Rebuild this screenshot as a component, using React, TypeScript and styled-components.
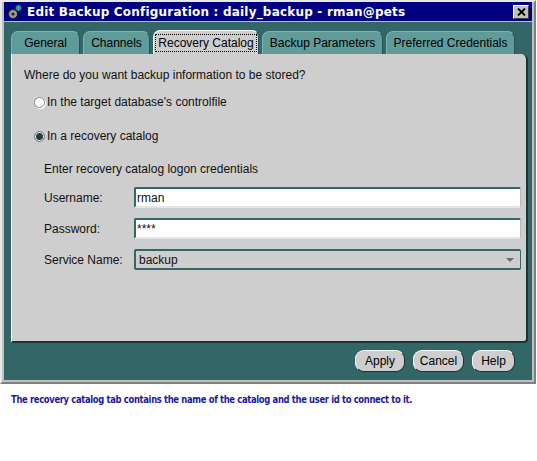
import React from 'react';
import styled, { createGlobalStyle } from 'styled-components';

const GlobalStyle = createGlobalStyle`
  html, body {
    margin: 0;
    padding: 0;
    background: #ffffff;
  }
  body {
    font-family: 'Liberation Sans', Arial, sans-serif;
  }
`;

const tabs = [
  { label: 'General', width: 69 },
  { label: 'Channels', width: 67 },
  { label: 'Recovery Catalog', width: 106 },
  { label: 'Backup Parameters', width: 121 },
  { label: 'Preferred Credentials', width: 129 },
];
const activeTab = 'Recovery Catalog';

const Frame = styled.div`
  width: 536px;
  box-sizing: border-box;
  background: #c0c0c0;
  border: 2px solid;
  border-color: #e8e8e8 #808080 #808080 #e8e8e8;
  padding: 0 2px 2px 2px;
`;

const TitleBar = styled.div`
  height: 19px;
  background: #000080;
  display: flex;
  align-items: center;
  padding: 0 3px;
  gap: 4px;
`;

const TitleText = styled.span`
  flex: 1;
  color: #ffffff;
  font-family: 'DejaVu Sans', Verdana, sans-serif;
  font-weight: bold;
  font-size: 12px;
  letter-spacing: 0.2px;
  white-space: nowrap;
`;

const CloseButton = styled.div`
  width: 16px;
  height: 14px;
  box-sizing: border-box;
  background: #c0c0c0;
  border: 1px solid;
  border-color: #ffffff #404040 #404040 #ffffff;
  display: flex;
  align-items: center;
  justify-content: center;
`;

const Body = styled.div`
  background: #336666;
  padding: 8px 4px 8px 7px;
  margin-top: 1px;
`;

const TabRow = styled.div`
  display: flex;
  gap: 3px;
  height: 24px;
  align-items: flex-end;
`;

const Tab = styled.div<{ $active: boolean; $width: number }>`
  width: ${(p) => p.$width}px;
  flex: none;
  height: ${(p) => (p.$active ? '24px' : '23px')};
  box-sizing: border-box;
  background: ${(p) => (p.$active ? '#cecece' : '#5f9b99')};
  border-radius: 7px 7px 0 0;
  border-top: 1px solid ${(p) => (p.$active ? '#ffffff' : '#7fb3b1')};
  border-left: 1px solid ${(p) => (p.$active ? '#ffffff' : '#7fb3b1')};
  border-right: 1px solid #2a5251;
  display: flex;
  align-items: center;
  justify-content: center;
  font-size: 12px;
  color: #000000;
  white-space: nowrap;
`;

const FocusLabel = styled.span`
  border: 1px dotted #000000;
  padding: 1px 2px;
  line-height: 14px;
`;

const Panel = styled.div`
  height: 289px;
  box-sizing: border-box;
  background: #cecece;
  border-radius: 0 6px 4px 2px;
  border-left: 1px solid #ffffff;
  border-bottom: 2px solid #1a3333;
  border-right: 2px solid #1a3333;
  padding: 13px 5px 0 12px;
  font-size: 12px;
  color: #111111;
`;

const Line = styled.div<{ $gap: number; $indent?: number }>`
  height: 16px;
  line-height: 16px;
  margin-top: ${(p) => p.$gap}px;
  padding-left: ${(p) => p.$indent ?? 0}px;
  display: flex;
  align-items: center;
  white-space: nowrap;
`;

const Radio = styled.span<{ $checked: boolean }>`
  width: 11px;
  height: 11px;
  box-sizing: border-box;
  border-radius: 50%;
  background: ${(p) => (p.$checked ? '#1f3f3f' : '#ffffff')};
  border: 1px solid #8a8a8a;
  box-shadow: ${(p) => (p.$checked ? 'inset 0 0 0 1px #ffffff' : '1px 1px 0 #ffffff')};
  margin-right: 2px;
`;

const FieldRow = styled.div`
  display: flex;
  align-items: center;
  height: 21px;
  margin-top: 10px;
  padding-left: 20px;
`;

const FieldLabel = styled.span`
  width: 90px;
  flex: none;
`;

const TextBox = styled.div`
  flex: 1;
  height: 21px;
  box-sizing: border-box;
  background: #ffffff;
  border-radius: 2px;
  border-top: 2px solid #336666;
  border-left: 2px solid #336666;
  border-right: 1px solid #b8b8b8;
  border-bottom: 2px solid #e4e4e4;
  padding-left: 1px;
  display: flex;
  align-items: center;
  font-size: 12px;
`;

const SelectBox = styled.div`
  flex: 1;
  height: 21px;
  box-sizing: border-box;
  background: #cecece;
  border-radius: 2px;
  border: 2px solid #336666;
  border-right-width: 1px;
  padding: 0 6px 0 3px;
  display: flex;
  align-items: center;
  justify-content: space-between;
`;

const Arrow = styled.span`
  width: 0;
  height: 0;
  border-left: 4px solid transparent;
  border-right: 4px solid transparent;
  border-top: 4px solid #6a6a6a;
`;

const ButtonRow = styled.div`
  display: flex;
  justify-content: flex-end;
  gap: 8px;
  margin-top: 7px;
  padding-right: 13px;
`;

const Button = styled.div<{ $width: number }>`
  width: ${(p) => p.$width}px;
  height: 22px;
  box-sizing: border-box;
  background: #cecece;
  border-radius: 9px;
  border: 1px solid;
  border-color: #ffffff #1a3333 #1a3333 #ffffff;
  display: flex;
  align-items: center;
  justify-content: center;
  font-size: 12px;
  color: #000000;
`;

const Caption = styled.div`
  margin: 9px 0 0 11px;
  font-family: 'DejaVu Sans Condensed', 'DejaVu Sans', sans-serif;
  font-weight: bold;
  font-size: 11px;
  letter-spacing: -0.4px;
  color: #1a1aa0;
  white-space: nowrap;
  transform: scaleX(0.85);
  transform-origin: left center;
`;

const AppIcon = () => (
  <svg width="16" height="16" viewBox="0 0 16 16">
    <circle cx="6" cy="10" r="4.5" fill="#9a9a9a" stroke="#202020" strokeWidth="1" />
    <circle cx="6" cy="10" r="1.6" fill="#202020" />
    <circle cx="11.5" cy="4" r="3" fill="#2a8a2a" />
    <path d="M11.5 1.5 V6.5 M9 4 H14" stroke="#40a0ff" strokeWidth="1.2" />
  </svg>
);

const App = () => {
  return (
    <>
      <GlobalStyle />
      <Frame>
        <TitleBar>
          <AppIcon />
          <TitleText>Edit Backup Configuration : daily_backup - rman@pets</TitleText>
          <CloseButton>
            <svg width="9" height="8" viewBox="0 0 9 8">
              <path d="M1 0.5 L8 7.5 M8 0.5 L1 7.5" stroke="#000" strokeWidth="1.8" />
            </svg>
          </CloseButton>
        </TitleBar>
        <Body>
          <TabRow>
            {tabs.map((t) => (
              <Tab key={t.label} $active={t.label === activeTab} $width={t.width}>
                {t.label === activeTab ? <FocusLabel>{t.label}</FocusLabel> : t.label}
              </Tab>
            ))}
          </TabRow>
          <Panel>
            <Line $gap={0}>Where do you want backup information to be stored?</Line>
            <Line $gap={11} $indent={10}>
              <Radio $checked={false} />
              In the target database's controlfile
            </Line>
            <Line $gap={18} $indent={10}>
              <Radio $checked={true} />
              In a recovery catalog
            </Line>
            <Line $gap={17} $indent={20}>Enter recovery catalog logon credentials</Line>
            <FieldRow>
              <FieldLabel>Username:</FieldLabel>
              <TextBox>rman</TextBox>
            </FieldRow>
            <FieldRow>
              <FieldLabel>Password:</FieldLabel>
              <TextBox>****</TextBox>
            </FieldRow>
            <FieldRow>
              <FieldLabel>Service Name:</FieldLabel>
              <SelectBox>
                backup
                <Arrow />
              </SelectBox>
            </FieldRow>
          </Panel>
          <ButtonRow>
            <Button $width={50}>Apply</Button>
            <Button $width={51}>Cancel</Button>
            <Button $width={43}>Help</Button>
          </ButtonRow>
        </Body>
      </Frame>
      <Caption>The recovery catalog tab contains the name of the catalog and the user id to connect to it.</Caption>
    </>
  );
};

export default App;
